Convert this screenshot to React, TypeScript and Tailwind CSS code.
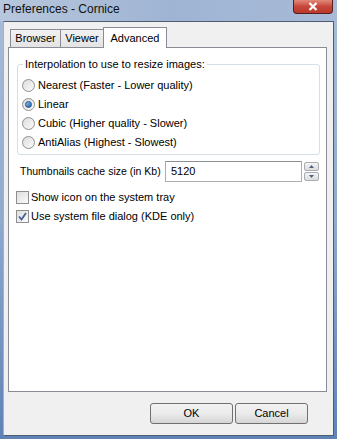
import type { ReactNode } from 'react'

const FONT = { fontFamily: '"Liberation Sans", Arial, sans-serif' }

function Radio({ checked, label }: { checked?: boolean; label: string }) {
  return (
    <div className="flex h-[19px] items-center gap-[3px] pl-[4px]">
      <span className="flex h-[13px] w-[13px] items-center justify-center rounded-full border border-[#8e8f8f] bg-gradient-to-br from-[#dcdcdc] to-[#fbfbfb]">
        {checked && (
          <span className="h-[7px] w-[7px] rounded-full border border-[#1b4f8a] bg-gradient-to-br from-[#8fc3f0] to-[#1c5ea8]" />
        )}
      </span>
      <span>{label}</span>
    </div>
  )
}

function Check({ checked, label }: { checked?: boolean; label: string }) {
  return (
    <div className="flex h-[19px] items-center gap-[2px] pl-[7px]">
      <span className="flex h-[13px] w-[13px] items-center justify-center border border-[#8e8f8f] bg-gradient-to-br from-[#dedede] to-[#fbfbfb]">
        {checked && (
          <svg width="9" height="9" viewBox="0 0 9 9">
            <path d="M1 4.5 L3.5 7.5 L8 1" stroke="#4a5f97" strokeWidth="1.8" fill="none" />
          </svg>
        )}
      </span>
      <span>{label}</span>
    </div>
  )
}

function Tab({ children, active, className }: { children: ReactNode; active?: boolean; className: string }) {
  if (active) {
    return (
      <div
        className={`relative z-10 -mb-px flex h-[21px] items-center justify-center border border-b-0 border-[#898c95] bg-white ${className}`}
      >
        {children}
      </div>
    )
  }
  return (
    <div
      className={`flex h-[18px] items-center justify-center border border-b-0 border-[#898c95] bg-gradient-to-b from-[#f2f2f2] to-[#e3e3e3] ${className}`}
    >
      {children}
    </div>
  )
}

function Button({ children, className }: { children: ReactNode; className: string }) {
  return (
    <div
      className={`flex h-[21px] items-center justify-center rounded-[3px] border border-[#707070] bg-gradient-to-b from-[#f2f2f2] via-[#ebebeb] to-[#d6d6d6] ${className}`}
    >
      {children}
    </div>
  )
}

export default function App() {
  return (
    <div
      className="flex h-[439px] w-[337px] flex-col overflow-hidden bg-gradient-to-b from-[#a9bdd8] via-[#8fa9cf] to-[#5f82b6] text-[11px] text-black"
      style={FONT}
    >
      {/* Title bar */}
      <div className="flex h-[21px] shrink-0 items-start justify-between bg-gradient-to-r from-[#b7c7dd] via-[#9fb4d3] to-[#a7bbd8]">
        <span className="pl-[3px] pt-[2px] text-[12px] leading-[14px] text-[#111]">Preferences - Cornice</span>
        <div className="mr-[4px] flex h-[14px] w-[40px] items-center justify-center rounded-b-[4px] border border-t-0 border-[#5a1c1c] bg-gradient-to-b from-[#e0897a] via-[#c7473a] to-[#b83a2c]">
          <svg width="10" height="9" viewBox="0 0 10 9">
            <path d="M1.5 1 L8.5 8 M8.5 1 L1.5 8" stroke="white" strokeWidth="2.2" />
          </svg>
        </div>
      </div>

      {/* Client area */}
      <div className="mx-[3px] mb-[3px] flex flex-1 flex-col border border-[#4e5d72] border-l-[#9fb0c8] bg-[#f0f0f0]">
        <div className="flex items-end pl-[6px] pt-[5px]">
          <Tab className="w-[51px]">Browser</Tab>
          <Tab className="-ml-px w-[44px]">Viewer</Tab>
          <Tab active className="-ml-px w-[64px]">
            Advanced
          </Tab>
        </div>

        <div className="ml-[4px] mr-[6px] flex h-[345px] flex-col border border-[#898c95] bg-white">
          <fieldset className="ml-[8px] mr-[6px] mt-[8px] rounded-[3px] border border-[#d5dfe5] pb-[2px] pt-[4px]">
            <legend className="ml-[5px] px-[2px] leading-[16px]">Interpolation to use to resize images:</legend>
            <Radio label="Nearest (Faster - Lower quality)" />
            <Radio checked label="Linear" />
            <Radio label="Cubic (Higher quality - Slower)" />
            <Radio label="AntiAlias (Highest - Slowest)" />
          </fieldset>

          <div className="mt-[6px] flex items-center pl-[11px]">
            <span className="w-[145px] whitespace-nowrap text-[10.5px]">Thumbnails cache size (in Kb)</span>
            <div className="flex h-[21px] w-[137px] items-center border border-[#abadb3] border-t-[#8c8f94] bg-white pl-[5px]">
              5120
            </div>
            <div className="ml-[2px] flex flex-col gap-px">
              <div className="flex h-[9px] w-[15px] items-center justify-center rounded-[2px] border border-[#a9acb2] bg-gradient-to-b from-[#f4f4f4] to-[#dcdcdc]">
                <svg width="5" height="3" viewBox="0 0 5 3">
                  <path d="M0 3 L2.5 0 L5 3 Z" fill="#4d6185" />
                </svg>
              </div>
              <div className="flex h-[9px] w-[15px] items-center justify-center rounded-[2px] border border-[#a9acb2] bg-gradient-to-b from-[#f4f4f4] to-[#dcdcdc]">
                <svg width="5" height="3" viewBox="0 0 5 3">
                  <path d="M0 0 L2.5 3 L5 0 Z" fill="#4d6185" />
                </svg>
              </div>
            </div>
          </div>

          <div className="mt-[6px]">
            <Check label="Show icon on the system tray" />
            <Check checked label="Use system file dialog (KDE only)" />
          </div>
        </div>

        <div className="mt-[11px] flex justify-end gap-[2px] pr-[25px]">
          <Button className="w-[83px]">OK</Button>
          <Button className="w-[73px]">Cancel</Button>
        </div>
      </div>
    </div>
  )
}
